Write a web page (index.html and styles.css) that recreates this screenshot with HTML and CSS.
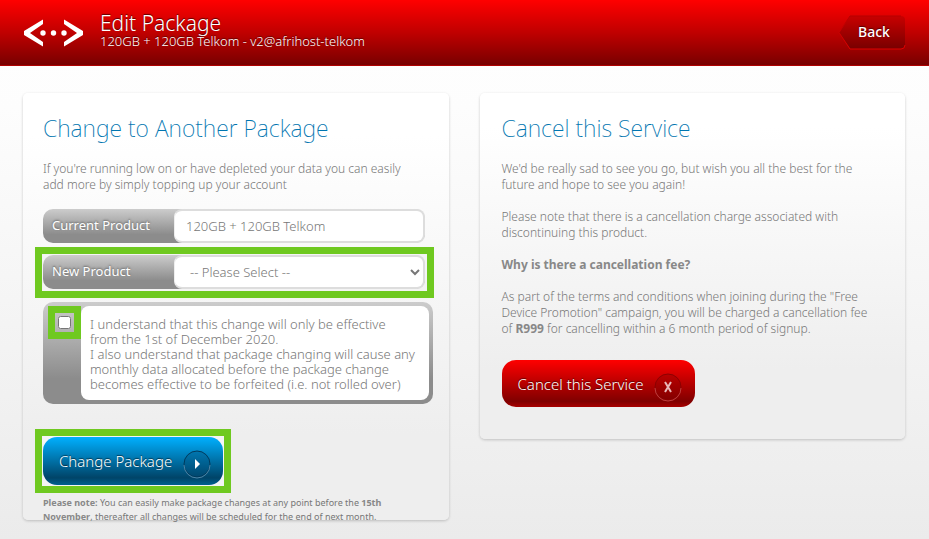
FILE: index.html
```html
<!DOCTYPE html>
<html lang="en">
<head>
    <meta charset="UTF-8">
    <meta name="viewport" content="width=device-width, initial-scale=1.0">
    <title>Edit Package</title>
    <link rel="stylesheet" href="styles.css">
</head>
<body>
    <header class="header">
        <svg class="logo" width="60" height="28" viewBox="0 0 60 28" aria-hidden="true">
            <path d="M19 0.500V5L6 14L19 23V27.500L0 16V12Z" fill="#fff"/>
            <path d="M40 0.500V5L53 14L40 23V27.500L59 16V12Z" fill="#fff"/>
            <circle cx="19" cy="14" r="2.700" fill="#fff"/>
            <circle cx="29.500" cy="14" r="2.700" fill="#fff"/>
            <circle cx="40" cy="14" r="2.700" fill="#fff"/>
        </svg>
        <div class="title">
            <h1>Edit Package</h1>
            <p>120GB + 120GB Telkom - v2@afrihost-telkom</p>
        </div>
        <a class="back" href="#">
            <svg class="back-shape" width="68" height="36" viewBox="0 0 68 36" aria-hidden="true">
                <defs>
                    <linearGradient id="backFill" x1="0" y1="0" x2="0" y2="1">
                        <stop offset="0" stop-color="#c80000"/>
                        <stop offset="1" stop-color="#780000"/>
                    </linearGradient>
                    <linearGradient id="backLine" x1="0" y1="0" x2="0" y2="1">
                        <stop offset="0" stop-color="#b40000"/>
                        <stop offset="1" stop-color="#e00000"/>
                    </linearGradient>
                </defs>
                <path d="M12 1H63Q67 1 67 5V30Q67 34 63 34H12L1 17.500Z" fill="url(#backFill)"/>
                <path d="M67 30Q67 34 63 34H12L1 17.500L12 1H63" fill="none" stroke="url(#backLine)"/>
            </svg>
            <span>Back</span>
        </a>
    </header>

    <main class="columns">
        <section class="card">
            <h2>Change to Another Package</h2>
            <p>If you're running low on or have depleted your data you can easily<br>add more by simply topping up your account</p>
            <form class="package-form">
                <div class="field">
                    <label for="currentProduct">Current Product</label>
                    <input type="text" id="currentProduct" value="120GB + 120GB Telkom" readonly>
                </div>
                <div class="highlight highlight-field">
                    <div class="field">
                        <label for="newProduct">New Product</label>
                        <select id="newProduct">
                            <option>-- Please Select --</option>
                        </select>
                    </div>
                </div>
                <div class="terms">
                    <div class="terms-check">
                        <input type="checkbox" id="agree">
                    </div>
                    <label for="agree">I understand that this change will only be effective<br>from the 1st of December 2020.<br>I also understand that package changing will cause any<br>monthly data allocated before the package change<br>becomes effective to be forfeited (i.e. not rolled over)</label>
                </div>
                <div class="highlight">
                    <button type="button" class="button blue">
                        Change Package
                        <svg width="30" height="30" viewBox="0 0 30 30" aria-hidden="true">
                            <circle cx="15" cy="15" r="13" fill="#004a75" fill-opacity="0.300" stroke="#003a5c"/>
                            <path d="M2 16A13 13 0 0 0 28 16" fill="none" stroke="#4d86a8"/>
                            <path d="M13 10L18 15L13 20Z" fill="#fff"/>
                        </svg>
                    </button>
                </div>
            </form>
            <p class="note"><strong>Please note:</strong> You can easily make package changes at any point before the <strong>15th<br>November</strong>, thereafter all changes will be scheduled for the end of next month.</p>
        </section>

        <section class="card cancel">
            <h2>Cancel this Service</h2>
            <p>We'd be really sad to see you go, but wish you all the best for the<br>future and hope to see you again!</p>
            <p>Please note that there is a cancellation charge associated with<br>discontinuing this product.</p>
            <p><strong>Why is there a cancellation fee?</strong></p>
            <p>As part of the terms and conditions when joining during the "Free<br>Device Promotion" campaign, you will be charged a cancellation fee<br>of <strong>R999</strong> for cancelling within a 6 month period of signup.</p>
            <button type="button" class="button red">
                Cancel this Service
                <svg width="30" height="30" viewBox="0 0 30 30" aria-hidden="true">
                    <circle cx="15" cy="15" r="13" fill="#800000" fill-opacity="0.300" stroke="#8c0000"/>
                    <path d="M2 16A13 13 0 0 0 28 16" fill="none" stroke="#c04040"/>
                    <path d="M12 10L18 20M18 10L12 20" stroke="#e8b8b8" stroke-width="2"/>
                </svg>
            </button>
        </section>
    </main>
</body>
</html>
```
FILE: styles.css
```css
* {
    box-sizing: border-box;
}
html {
    min-height: 100%;
    background: linear-gradient(#fff, #fdfdfd 20%, #ebebeb);
}
body {
    margin: 0;
    font-family: "Noto Sans", "Open Sans", sans-serif;
    font-size: 13px;
    font-weight: 300;
    line-height: 16px;
    color: #777;
}
h1, h2, p {
    margin: 0;
    font-weight: 300;
}
strong {
    color: #888;
    font-weight: 700;
}
.header {
    display: flex;
    align-items: center;
    height: 66px;
    padding: 0 23px 0 24px;
    background: linear-gradient(#f00, #c00000 50%, #780000);
    border-bottom: 1px solid #b00000;
    color: #fff;
    text-shadow: 0 -1px 1px #500;
}
.title {
    margin-left: 16px;
    padding-bottom: 4px;
}
.title h1 {
    font-size: 21px;
    line-height: 20px;
}
.back {
    position: relative;
    display: flex;
    align-items: center;
    justify-content: center;
    width: 68px;
    height: 36px;
    margin-left: auto;
    color: #fff;
    font-size: 14px;
    font-weight: 500;
    text-decoration: none;
}
.back-shape {
    position: absolute;
    top: 0;
    left: 0;
}
.back span {
    position: relative;
    padding: 0 0 2px 4px;
}
.columns {
    display: grid;
    grid-template-columns: minmax(0, 1fr) minmax(0, 1fr);
    align-items: start;
    gap: 31px;
    padding: 27px 24px 18px 23px;
}
.card {
    padding: 23px 20px 0;
    background: linear-gradient(#fff, #fff 10%, #eee 80%);
    border-radius: 5px;
    box-shadow: 0 1px 3px rgba(0, 0, 0, 0.2);
}
.card h2 {
    margin-bottom: 21px;
    color: #0075b0;
    font-size: 23px;
    font-weight: 200;
    line-height: 24px;
}
.card p {
    font-size: 12px;
    white-space: nowrap;
}
.package-form {
    display: flex;
    flex-direction: column;
    align-items: flex-start;
    margin-top: 16px;
}
.field {
    display: flex;
    width: 100%;
    max-width: 382px;
    height: 34px;
    background: linear-gradient(#ccc, #8c8c8c 75%);
    border-radius: 10px;
}
.field label {
    width: 131px;
    padding: 8px 9px;
    color: #fff;
    font-weight: 400;
    text-shadow: 0 -1px 2px #666;
}
.field input,
.field select {
    flex: 1;
    min-width: 0;
    padding: 0 11px;
    background-color: #fff;
    border: 2px solid #ddd;
    border-left: 1px solid #eee;
    border-radius: 8px;
    color: #777;
    font: inherit;
}
.field select {
    padding: 0;
    text-indent: 11px;
}
.highlight {
    margin: 0 -8px;
    padding: 1px;
    background: #f4f4f4;
    border: 7px solid #6fc920;
}
.highlight-field {
    width: 399px;
    margin: 4px -8px;
    padding-bottom: 2px;
}
.terms {
    display: flex;
    width: 390px;
    padding: 4px 4px 4px 5px;
    background: linear-gradient(#ccc, #8c8c8c 75%);
    border-radius: 10px;
}
.terms-check {
    width: 33px;
    height: 33px;
    padding: 3px;
    border: 7px solid #6fc920;
}
.terms-check input {
    display: block;
    width: 13px;
    height: 13px;
    margin: 0;
}
.terms label {
    flex: 1;
    padding: 11px 9px 8px;
    background: #fff;
    border-radius: 8px;
    font-size: 13px;
    line-height: 15px;
    white-space: nowrap;
}
.button {
    display: flex;
    align-items: center;
    gap: 10px;
    height: 47px;
    padding: 0 11px 0 16px;
    border: none;
    border-radius: 14px;
    color: #fff;
    font-family: inherit;
    font-size: 15px;
    font-weight: 300;
    text-shadow: 0 -1px 1px rgba(0, 0, 0, 0.6);
    cursor: pointer;
}
.button svg {
    margin-top: 6px;
}
.blue {
    height: 48px;
    background: linear-gradient(#00b0ff, #004468 85%, #006090);
}
.red {
    margin-top: 23px;
    padding: 0 12px 0 16px;
    background: linear-gradient(#f00, #800000 88%, #a80000);
}
.terms + .highlight {
    margin-top: 25px;
}
.card .note {
    margin: 3px 0 0;
    height: 24px;
    font-size: 9px;
    font-weight: 400;
    line-height: 14px;
}
.cancel {
    padding: 23px 22px 32px;
}
.cancel p + p {
    margin-top: 16px;
}
```
